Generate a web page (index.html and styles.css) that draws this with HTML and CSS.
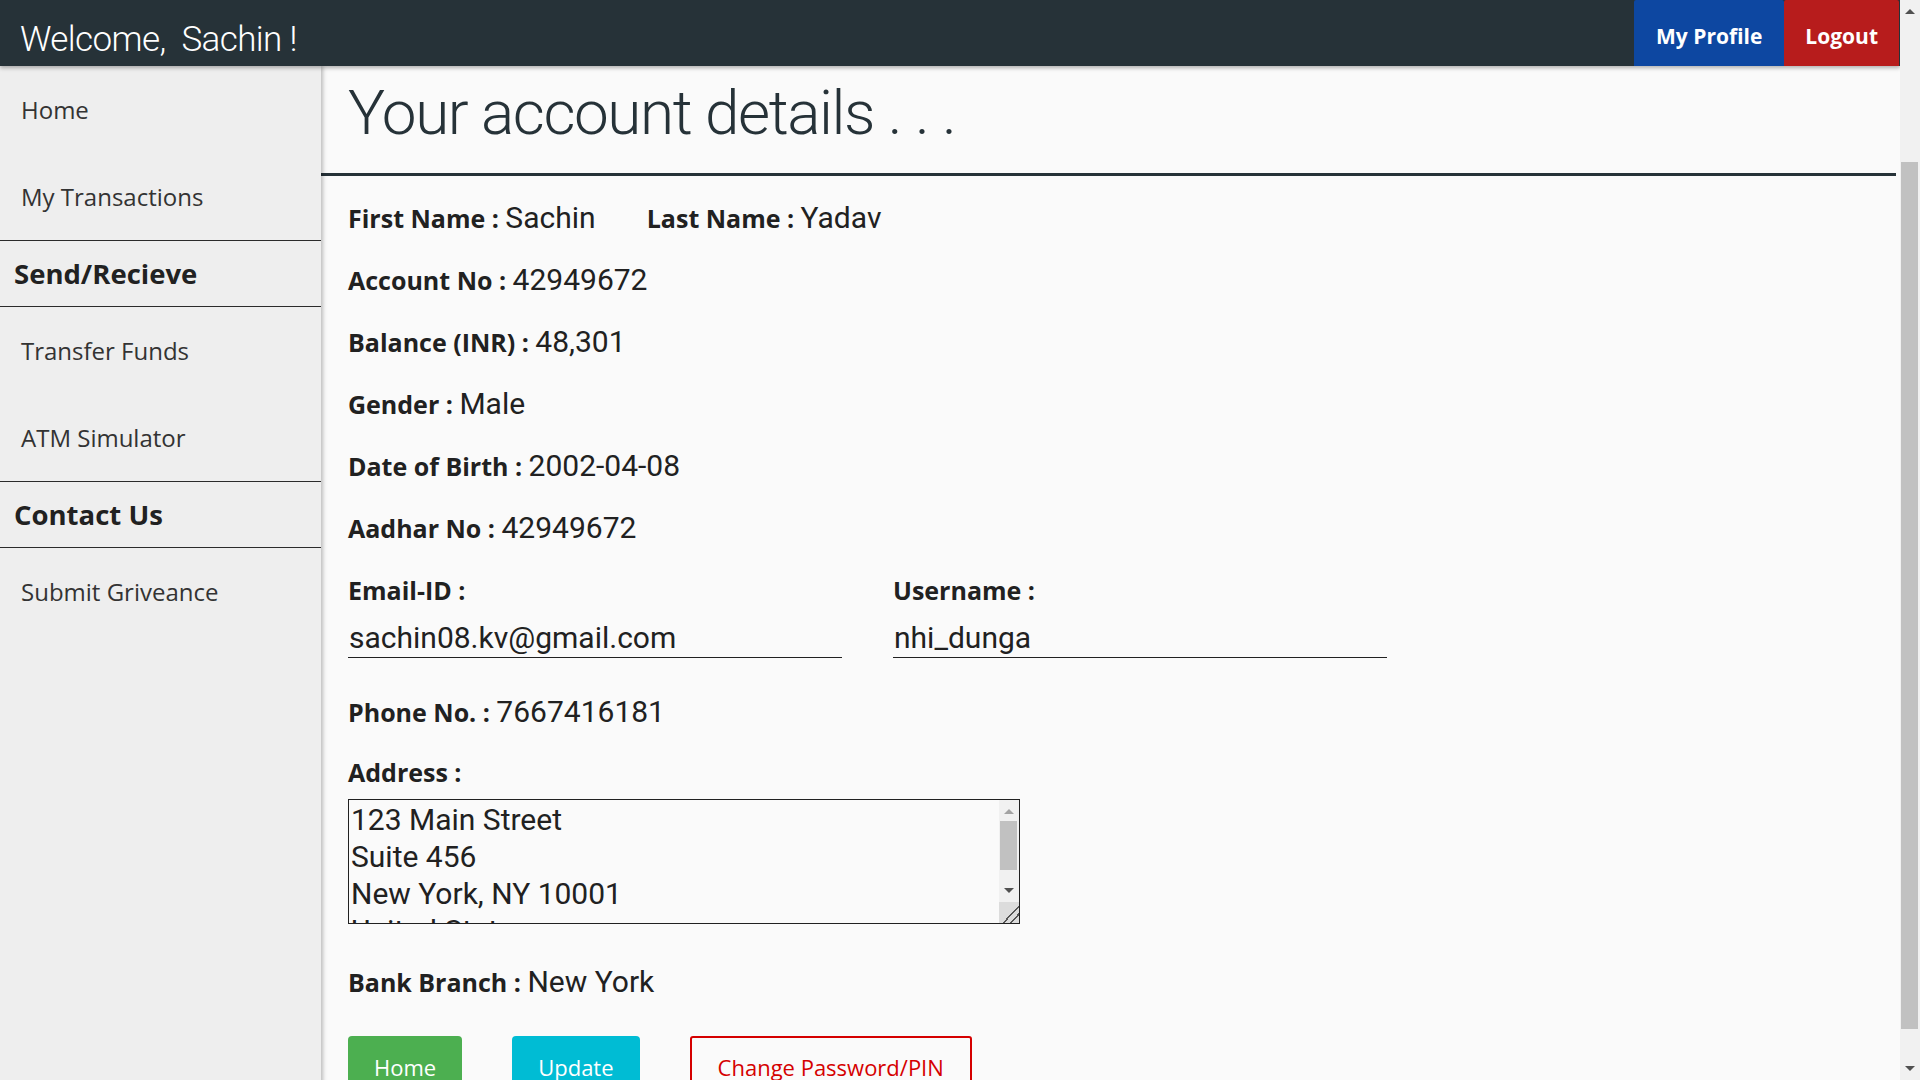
FILE: index.html
```html
<!DOCTYPE html>
<html lang="en">
<head>
<meta charset="utf-8">
<title>Account details</title>
<link rel="stylesheet" href="styles.css">
</head>
<body>
<header class="topbar">
  <div class="welcome">Welcome,&nbsp; Sachin !</div>
  <nav class="top-actions">
    <a class="top-btn profile" href="#">My Profile</a>
    <a class="top-btn logout" href="#">Logout</a>
  </nav>
</header>
<div class="layout">
  <aside class="sidebar">
    <a class="side-item" href="#">Home</a>
    <a class="side-item" href="#">My Transactions</a>
    <div class="side-head">Send/Recieve</div>
    <a class="side-item" href="#">Transfer Funds</a>
    <a class="side-item" href="#">ATM Simulator</a>
    <div class="side-head">Contact Us</div>
    <a class="side-item" href="#">Submit Griveance</a>
  </aside>
  <main class="content">
    <h1 class="page-title">Your account details . . .</h1>
    <hr class="title-rule">
    <section class="details">
      <div class="row">
        <span class="pair first-pair"><span class="label">First Name : </span><span class="value">Sachin</span></span>
        <span class="pair"><span class="label">Last Name : </span><span class="value">Yadav</span></span>
      </div>
      <div class="row"><span class="label">Account No : </span><span class="value">42949672</span></div>
      <div class="row"><span class="label">Balance (INR) : </span><span class="value">48,301</span></div>
      <div class="row"><span class="label">Gender : </span><span class="value">Male</span></div>
      <div class="row"><span class="label">Date of Birth : </span><span class="value">2002-04-08</span></div>
      <div class="row"><span class="label">Aadhar No : </span><span class="value">42949672</span></div>
      <div class="field-grid">
        <div class="field">
          <div class="line"><span class="label">Email-ID :</span></div>
          <input class="text-input" type="text" value="sachin08.kv@gmail.com">
        </div>
        <div class="field">
          <div class="line"><span class="label">Username :</span></div>
          <input class="text-input" type="text" value="nhi_dunga">
        </div>
      </div>
      <div class="line phone"><span class="label">Phone No. : </span><span class="value">7667416181</span></div>
      <div class="line address"><span class="label">Address :</span></div>
      <div class="address-wrap">
        <textarea class="address-box">123 Main Street
Suite 456
New York, NY 10001
United States</textarea>
        <div class="ta-scrollbar" aria-hidden="true">
          <span class="ta-up"></span>
          <span class="ta-thumb"></span>
          <span class="ta-down"></span>
          <span class="ta-corner"></span>
        </div>
      </div>
      <div class="line branch"><span class="label">Bank Branch : </span><span class="value">New York</span></div>
      <div class="actions">
        <button class="btn btn-home" type="button">Home</button>
        <button class="btn btn-update" type="button">Update</button>
        <button class="btn btn-outline" type="button">Change Password/PIN</button>
      </div>
    </section>
  </main>
</div>
<div class="page-scrollbar" aria-hidden="true">
  <span class="sb-arrow sb-up"></span>
  <span class="sb-thumb"></span>
  <span class="sb-arrow sb-down"></span>
</div>
</body>
</html>
```
FILE: styles.css
```css
* { box-sizing: border-box; }

html, body {
  margin: 0;
  padding: 0;
  background: #fafafa;
}

html::-webkit-scrollbar { width: 0; height: 0; }

body {
  font-family: "Open Sans", "Liberation Sans", sans-serif;
  color: #212121;
  padding-right: 20px;
}

a { text-decoration: none; }

/* ---------- top bar ---------- */
.topbar {
  position: relative;
  z-index: 2;
  height: 66px;
  background: #263238;
  display: flex;
  align-items: stretch;
  justify-content: space-between;
  padding-right: 1px;
  box-shadow: 0 2px 4px rgba(0, 0, 0, 0.3);
}

.welcome {
  font-family: Roboto, "Liberation Sans", sans-serif;
  font-weight: 300;
  font-size: 35px;
  letter-spacing: -0.6px;
  line-height: 41px;
  color: #ffffff;
  padding: 19px 0 0 20px;
}

.top-actions {
  display: flex;
}

.top-btn {
  display: flex;
  align-items: center;
  padding: 6px 22px 0;
  font-family: "Open Sans", sans-serif;
  font-weight: 700;
  font-size: 21px;
  line-height: 30px;
  color: #ffffff;
  border-radius: 2px 2px 0 0;
}

.profile { background: #0d47a1; }
.logout { background: #b71c1c; padding: 6px 21px 0; }

/* ---------- layout ---------- */
.layout {
  display: flex;
  min-height: calc(100vh - 66px);
}

.sidebar {
  position: relative;
  z-index: 1;
  flex: 0 0 321px;
  width: 321px;
  background: #eeeeee;
  box-shadow: 2px 0 4px rgba(0, 0, 0, 0.25);
  display: flex;
  flex-direction: column;
}

.side-item {
  display: block;
  height: 87px;
  line-height: 87px;
  padding-left: 21px;
  font-size: 24px;
  color: #333333;
}

.side-head {
  height: 67px;
  line-height: 65px;
  padding-left: 14px;
  font-size: 27.5px;
  font-weight: 700;
  color: #212121;
  border-top: 1px solid #2b2b2b;
  border-bottom: 1px solid #2b2b2b;
}

/* ---------- main content ---------- */
.content {
  flex: 1;
  min-width: 0;
}

.page-title {
  margin: 9px 0 0 27px;
  font-family: Roboto, "Liberation Sans", sans-serif;
  font-weight: 300;
  font-size: 62px;
  letter-spacing: -1.4px;
  line-height: 76px;
  color: #263238;
}

.title-rule {
  margin: 22px 4px 0 0;
  border: 0;
  height: 3px;
  background: #263238;
}

.details {
  padding: 22px 0 40px 27px;
}

.row {
  height: 62px;
  line-height: 40px;
  white-space: nowrap;
}

.line {
  line-height: 40px;
  height: 40px;
  white-space: nowrap;
}

.first-pair {
  margin-right: 47px;
}

.label {
  font-family: "Open Sans", sans-serif;
  font-weight: 700;
  font-size: 25px;
  color: #212121;
}

.value {
  font-family: Roboto, "Liberation Sans", sans-serif;
  font-weight: 400;
  font-size: 30px;
  color: #212121;
}

.field-grid {
  display: flex;
  gap: 51px;
}

.field {
  width: 494px;
}

.text-input {
  display: block;
  width: 100%;
  height: 41px;
  margin-top: 7px;
  padding: 0 1px;
  border: 0;
  border-bottom: 1px solid #212121;
  background: transparent;
  font-family: Roboto, "Liberation Sans", sans-serif;
  font-size: 30px;
  line-height: 40px;
  color: #212121;
  outline: none;
}

.phone { margin-top: 34px; }
.address { margin-top: 20px; }

.address-wrap {
  position: relative;
  width: 672px;
  height: 125px;
  margin-top: 7px;
}

.address-box {
  display: block;
  width: 100%;
  height: 100%;
  padding: 1px 24px 1px 2px;
  border: 1px solid #212121;
  background: transparent;
  font-family: Roboto, "Liberation Sans", sans-serif;
  font-size: 30px;
  line-height: 37px;
  color: #212121;
  overflow-y: scroll;
  resize: none;
}

.address-box::-webkit-scrollbar { width: 0; }

/* drawn scrollbar of the address box */
.ta-scrollbar {
  position: absolute;
  top: 1px;
  right: 1px;
  bottom: 1px;
  width: 20px;
  background: #f1f1f1;
  display: flex;
  flex-direction: column;
  align-items: center;
}

.ta-up,
.ta-down {
  display: block;
  width: 0;
  height: 0;
  border-left: 5px solid transparent;
  border-right: 5px solid transparent;
}

.ta-up {
  margin-top: 9px;
  border-bottom: 5px solid #a3a3a3;
}

.ta-thumb {
  display: block;
  width: 17px;
  height: 49px;
  margin: 7px 0 0 -1px;
  background: #c1c1c1;
}

.ta-down {
  margin-top: auto;
  margin-bottom: 9px;
  border-top: 5px solid #505050;
}

.ta-corner {
  display: block;
  align-self: stretch;
  height: 21px;
  background-color: #dcdcdc;
  background-image: linear-gradient(to bottom right,
    transparent 58%, #555555 58%, #555555 63%,
    transparent 63%, transparent 76%, #555555 76%, #555555 81%,
    transparent 81%);
}

.branch { margin-top: 38px; }

.actions {
  display: flex;
  gap: 50px;
  margin-top: 34px;
}

.btn {
  font-family: "Open Sans", sans-serif;
  font-size: 22px;
  line-height: 30px;
  padding: 16px 26px;
  border: 0;
  border-radius: 4px;
  color: #ffffff;
  cursor: pointer;
}

.btn-home { background: #4caf50; }
.btn-update { background: #00bcd4; }

.btn-outline {
  background: transparent;
  border: 2px solid #d50000;
  border-radius: 3px;
  padding: 14px 26px;
  color: #d50000;
}

/* ---------- window scrollbar (drawn) ---------- */
.page-scrollbar {
  position: fixed;
  top: 0;
  right: 0;
  z-index: 5;
  width: 20px;
  height: 100vh;
  background: #f1f1f1;
  display: flex;
  flex-direction: column;
  align-items: center;
}

.sb-arrow {
  display: block;
  width: 0;
  height: 0;
  border-left: 5px solid transparent;
  border-right: 5px solid transparent;
}

.sb-up {
  margin-top: 9px;
  border-bottom: 5px solid #505050;
}

.sb-thumb {
  display: block;
  width: 17px;
  height: 867px;
  margin: 148px 0 0 -1px;
  background: #c1c1c1;
}

.sb-down {
  margin-top: auto;
  margin-bottom: 9px;
  border-top: 5px solid #505050;
}
```
